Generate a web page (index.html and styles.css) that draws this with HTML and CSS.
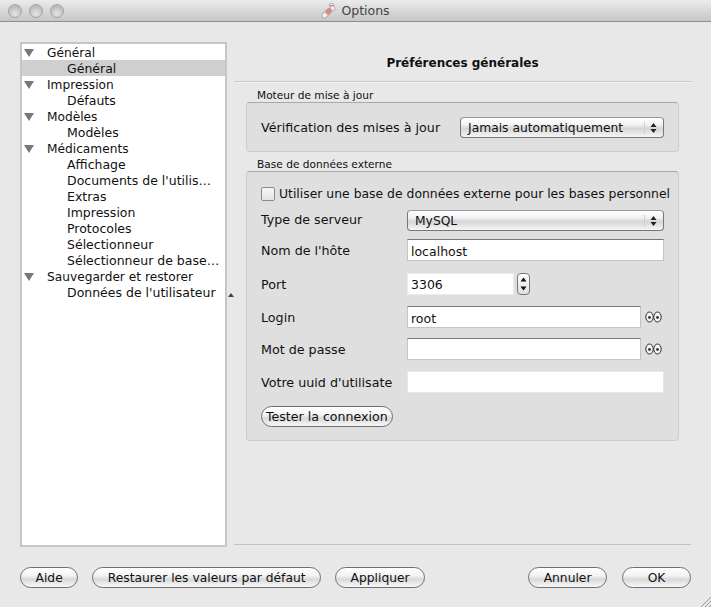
FILE: index.html
```html
<!DOCTYPE html>
<html lang="fr">
<head>
    <meta charset="UTF-8">
    <meta name="viewport" content="width=device-width, initial-scale=1.0">
    <title>Options</title>
    <link rel="stylesheet" href="styles.css">
</head>
<body>
    <div class="window">
        <div class="titlebar">
            <div class="lights">
                <span class="light"></span>
                <span class="light"></span>
                <span class="light"></span>
            </div>
            <div class="window-title">
                <svg class="app-icon" width="15" height="17" viewBox="0 0 15 17">
                    <path d="M3.500 13.500 6 11" stroke="#a9a0a0" stroke-width="5.500" stroke-linecap="round"/>
                    <path d="M6 11 8 9" stroke="#b98f8f" stroke-width="5.500" stroke-linecap="round"/>
                    <path d="M3.500 13.500 6 11" stroke="#f7f2f2" stroke-width="4" stroke-linecap="round"/>
                    <path d="M6.500 10.500 8 9" stroke="#e58a8a" stroke-width="4" stroke-linecap="round"/>
                    <path d="M10.500 3.500 12 6.500" stroke="#a8a8a8" stroke-width="5" stroke-linecap="round"/>
                    <path d="M10.500 3.500 12 6.500" stroke="#f1eded" stroke-width="3.500" stroke-linecap="round"/>
                    <path d="M9.500 4 12.500 3.500" stroke="#dd8a8a" stroke-width="1.500" stroke-linecap="round"/>
                </svg>
                <span>Options</span>
            </div>
        </div>

        <div class="content">
            <div class="tree">
                <div class="node"><i class="caret"></i>Général</div>
                <div class="leaf selected">Général</div>
                <div class="node"><i class="caret"></i>Impression</div>
                <div class="leaf">Défauts</div>
                <div class="node"><i class="caret"></i>Modèles</div>
                <div class="leaf">Modèles</div>
                <div class="node"><i class="caret"></i>Médicaments</div>
                <div class="leaf">Affichage</div>
                <div class="leaf">Documents de l'utilis…</div>
                <div class="leaf">Extras</div>
                <div class="leaf">Impression</div>
                <div class="leaf">Protocoles</div>
                <div class="leaf">Sélectionneur</div>
                <div class="leaf">Sélectionneur de base…</div>
                <div class="node"><i class="caret"></i>Sauvegarder et restorer</div>
                <div class="leaf">Données de l'utilisateur</div>
            </div>

            <div class="splitter"><i class="splitter-mark"></i></div>

            <div class="pane">
                <h2 class="pane-title">Préférences générales</h2>
                <div class="groups">
                    <div class="group-label first">Moteur de mise à jour</div>
                    <div class="group update-group">
                        <span class="update-label">Vérification des mises à jour</span>
                        <div class="popup update-popup">
                            <span>Jamais automatiquement</span>
                            <svg class="popup-arrows" width="7" height="12" viewBox="0 0 7 12"><path d="M3.500 1 6.500 5h-6zM3.500 11 .5 7h6z" fill="#222"/></svg>
                        </div>
                    </div>

                    <div class="group-label">Base de données externe</div>
                    <div class="group db-group">
                        <label class="check-row">
                            <input type="checkbox" class="check">
                            <span>Utiliser une base de données externe pour les bases personnel</span>
                        </label>
                        <div class="form">
                            <span class="form-label first-label">Type de serveur</span>
                            <div class="popup">
                                <span>MySQL</span>
                                <svg class="popup-arrows" width="7" height="12" viewBox="0 0 7 12"><path d="M3.500 1 6.500 5h-6zM3.500 11 .5 7h6z" fill="#222"/></svg>
                            </div>

                            <span class="form-label">Nom de l'hôte</span>
                            <input class="field" type="text" value="localhost">

                            <span class="form-label">Port</span>
                            <div class="port-row">
                                <input class="field port" type="text" value="3306">
                                <div class="stepper">
                                    <svg width="7" height="16" viewBox="0 0 7 16"><path d="M3.500 1.500 6.500 5.500h-6zM3.500 14.500 .5 10.500h6z" fill="#111"/></svg>
                                </div>
                            </div>

                            <span class="form-label">Login</span>
                            <div class="secret-row">
                                <input class="field secret" type="text" value="root">
                                <svg class="eyes" width="17" height="12" viewBox="0 0 17 12"><ellipse cx="4.500" cy="6" rx="3.700" ry="5" fill="#f4f4f4" stroke="#333"/><ellipse cx="12.500" cy="6" rx="3.700" ry="5" fill="#f4f4f4" stroke="#333"/><circle cx="4.500" cy="6.500" r="1.400" fill="#333"/><circle cx="12.500" cy="6.500" r="1.400" fill="#333"/></svg>
                            </div>

                            <span class="form-label">Mot de passe</span>
                            <div class="secret-row">
                                <input class="field secret" type="password">
                                <svg class="eyes" width="17" height="12" viewBox="0 0 17 12"><ellipse cx="4.500" cy="6" rx="3.700" ry="5" fill="#f4f4f4" stroke="#333"/><ellipse cx="12.500" cy="6" rx="3.700" ry="5" fill="#f4f4f4" stroke="#333"/><circle cx="4.500" cy="6.500" r="1.400" fill="#333"/><circle cx="12.500" cy="6.500" r="1.400" fill="#333"/></svg>
                            </div>

                            <span class="form-label">Votre uuid d'utilisate</span>
                            <input class="field plain" type="text">
                        </div>
                        <button class="btn test-btn">Tester la connexion</button>
                    </div>
                </div>
                <div class="pane-rule"></div>
            </div>
        </div>

        <div class="footer">
            <button class="btn">Aide</button>
            <button class="btn">Restaurer les valeurs par défaut</button>
            <button class="btn">Appliquer</button>
            <button class="btn cancel">Annuler</button>
            <button class="btn ok">OK</button>
        </div>

        <svg class="grip" width="11" height="11" viewBox="0 0 11 11">
            <path d="M1 11 11 1M5 11l6-6M9 11l2-2" stroke="#9a9a9a" fill="none"/>
        </svg>
    </div>
</body>
</html>
```

FILE: styles.css
```css
html, body {
    margin: 0;
    padding: 0;
}
body {
    font-family: "DejaVu Sans", sans-serif;
    font-size: 12.500px;
    color: #111;
    background-color: #e8e8e8;
}
.window {
    position: relative;
    width: 711px;
    height: 607px;
    display: flex;
    flex-direction: column;
    overflow: hidden;
}

/* title bar */
.titlebar {
    position: relative;
    flex: none;
    height: 21px;
    border-bottom: 1px solid #8f8f8f;
    background: linear-gradient(#ebebeb, #c6c6c6);
    display: flex;
    align-items: center;
    justify-content: center;
}
.lights {
    position: absolute;
    left: 8px;
    top: 4px;
    display: flex;
    gap: 7px;
}
.light {
    width: 12px;
    height: 12px;
    border: 1px solid #a4a4a4;
    border-radius: 50%;
    background: radial-gradient(circle at 50% 75%, #e6e6e6, #bcbcbc 70%);
}
.window-title {
    display: flex;
    align-items: center;
    gap: 5px;
    font-size: 12.500px;
    color: #444;
}

/* main area */
.content {
    flex: none;
    height: 505px;
    margin-top: 20px;
    padding-left: 20px;
    display: flex;
}
.tree {
    flex: none;
    width: 203px;
    height: 501px;
    border: 2px solid #c6c6c6;
    background: white;
}
.node, .leaf {
    box-sizing: border-box;
    height: 16px;
    line-height: 16px;
    padding-top: 1px;
    white-space: nowrap;
}
.node {
    position: relative;
    padding-left: 25px;
    font-size: 12.200px;
}
.leaf {
    padding-left: 45px;
}
.selected {
    background-color: #cfcfcf;
}
.caret {
    position: absolute;
    left: 2px;
    top: 5px;
    border-left: 5px solid transparent;
    border-right: 5px solid transparent;
    border-top: 8px solid #777;
}
.splitter {
    flex: none;
    width: 7px;
    display: flex;
    align-items: center;
    justify-content: center;
}
.splitter-mark {
    border-left: 3px solid transparent;
    border-right: 3px solid transparent;
    border-bottom: 4px solid #444;
}
.pane {
    flex: none;
    width: 457px;
    height: 503px;
    display: flex;
    flex-direction: column;
}
.pane-title {
    margin: 0;
    height: 39px;
    line-height: 42px;
    border-bottom: 1px solid #c8c8c8;
    box-shadow: 0 1px 0 #f4f4f4;
    font-size: 12px;
    font-weight: bold;
    text-align: center;
}
.groups {
    padding: 0 12px;
}
.pane-rule {
    margin-top: auto;
    height: 1px;
    background-color: #c2c2c2;
}

/* group boxes */
.group-label {
    height: 15px;
    line-height: 17px;
    margin-top: 4px;
    padding-left: 11px;
    font-size: 10.600px;
}
.group-label.first {
    margin-top: 5px;
}
.group {
    border: 1px solid #cdcdcd;
    border-top-color: #a8a8a8;
    border-radius: 4px;
    background-color: #dfdfdf;
    box-sizing: border-box;
}
.update-group {
    height: 50px;
    padding: 1px 14px 0;
    display: flex;
    align-items: center;
    justify-content: space-between;
}
.update-label {
    font-size: 12.700px;
}
.db-group {
    height: 270px;
    padding: 14px 14px 0;
}
.check-row {
    display: flex;
    align-items: center;
    gap: 4px;
    height: 15px;
    font-size: 12.400px;
    white-space: nowrap;
}
.check {
    appearance: none;
    flex: none;
    width: 14px;
    height: 14px;
    margin: 0;
    border: 1px solid #8a8a8a;
    border-radius: 2px;
    background: linear-gradient(#f6f6f6, #e4e4e4);
}
.form {
    display: grid;
    grid-template-columns: 146px 257px;
    grid-template-rows: 29px 34px 33px 32px 33px 22px;
    align-items: start;
    margin-top: 9px;
}
.form-label {
    height: 22px;
    line-height: 23px;
    font-size: 12.700px;
    white-space: nowrap;
}
.first-label {
    line-height: 20px;
}

/* controls */
.popup {
    box-sizing: border-box;
    height: 21px;
    padding: 0 6px 0 7px;
    border: 1px solid #777;
    border-top-color: #999;
    border-radius: 4px;
    font-size: 12.300px;
    background: linear-gradient(#fff 0, #f2f2f2 35%, #d6d6d6 55%, #f6f6f6 100%);
    display: flex;
    align-items: center;
    justify-content: space-between;
}
.update-popup {
    width: 204px;
}
.popup-arrows {
    padding-left: 5px;
    border-left: 1px solid #cfcfcf;
    height: 12px;
}
.field {
    box-sizing: border-box;
    height: 22px;
    width: 257px;
    margin: 0;
    padding: 2px 3px 0;
    border: 1px solid #c4c4c4;
    border-top-color: #777;
    font-family: inherit;
    font-size: 12.500px;
    color: #111;
    background: white;
    outline: none;
}
.plain {
    border-color: #e8e8e8;
}
.port-row, .secret-row {
    display: flex;
    align-items: center;
}
.port {
    width: 107px;
    padding-left: 3px;
    padding-top: 1px;
    border-color: #ececec;
}
.stepper {
    box-sizing: border-box;
    width: 13px;
    height: 22px;
    margin-left: 3px;
    border: 1px solid #777;
    border-radius: 4px;
    background: linear-gradient(#fff, #e0e0e0);
    display: flex;
    align-items: center;
    justify-content: center;
}
.secret {
    width: 234px;
}
.eyes {
    margin-left: 4px;
}
.btn {
    box-sizing: border-box;
    height: 21px;
    padding: 0 14.500px;
    border: 1px solid #6f6f6f;
    border-radius: 11px;
    font-family: inherit;
    font-size: 12.300px;
    color: #111;
    white-space: nowrap;
    background: linear-gradient(#fff 0, #f3f3f3 40%, #d9d9d9 60%, #f8f8f8 100%);
}
.test-btn {
    width: 132px;
    margin-top: 13px;
    padding: 0 4px;
    display: block;
    font-size: 12.600px;
    text-align: left;
}

/* bottom buttons */
.footer {
    flex: none;
    height: 21px;
    margin-top: 20px;
    padding: 0 20px;
    display: flex;
    gap: 14px;
}
.cancel {
    margin-left: auto;
}
.ok {
    width: 69px;
    margin-left: 1px;
}
.grip {
    position: absolute;
    right: 0;
    bottom: 0;
}
```
